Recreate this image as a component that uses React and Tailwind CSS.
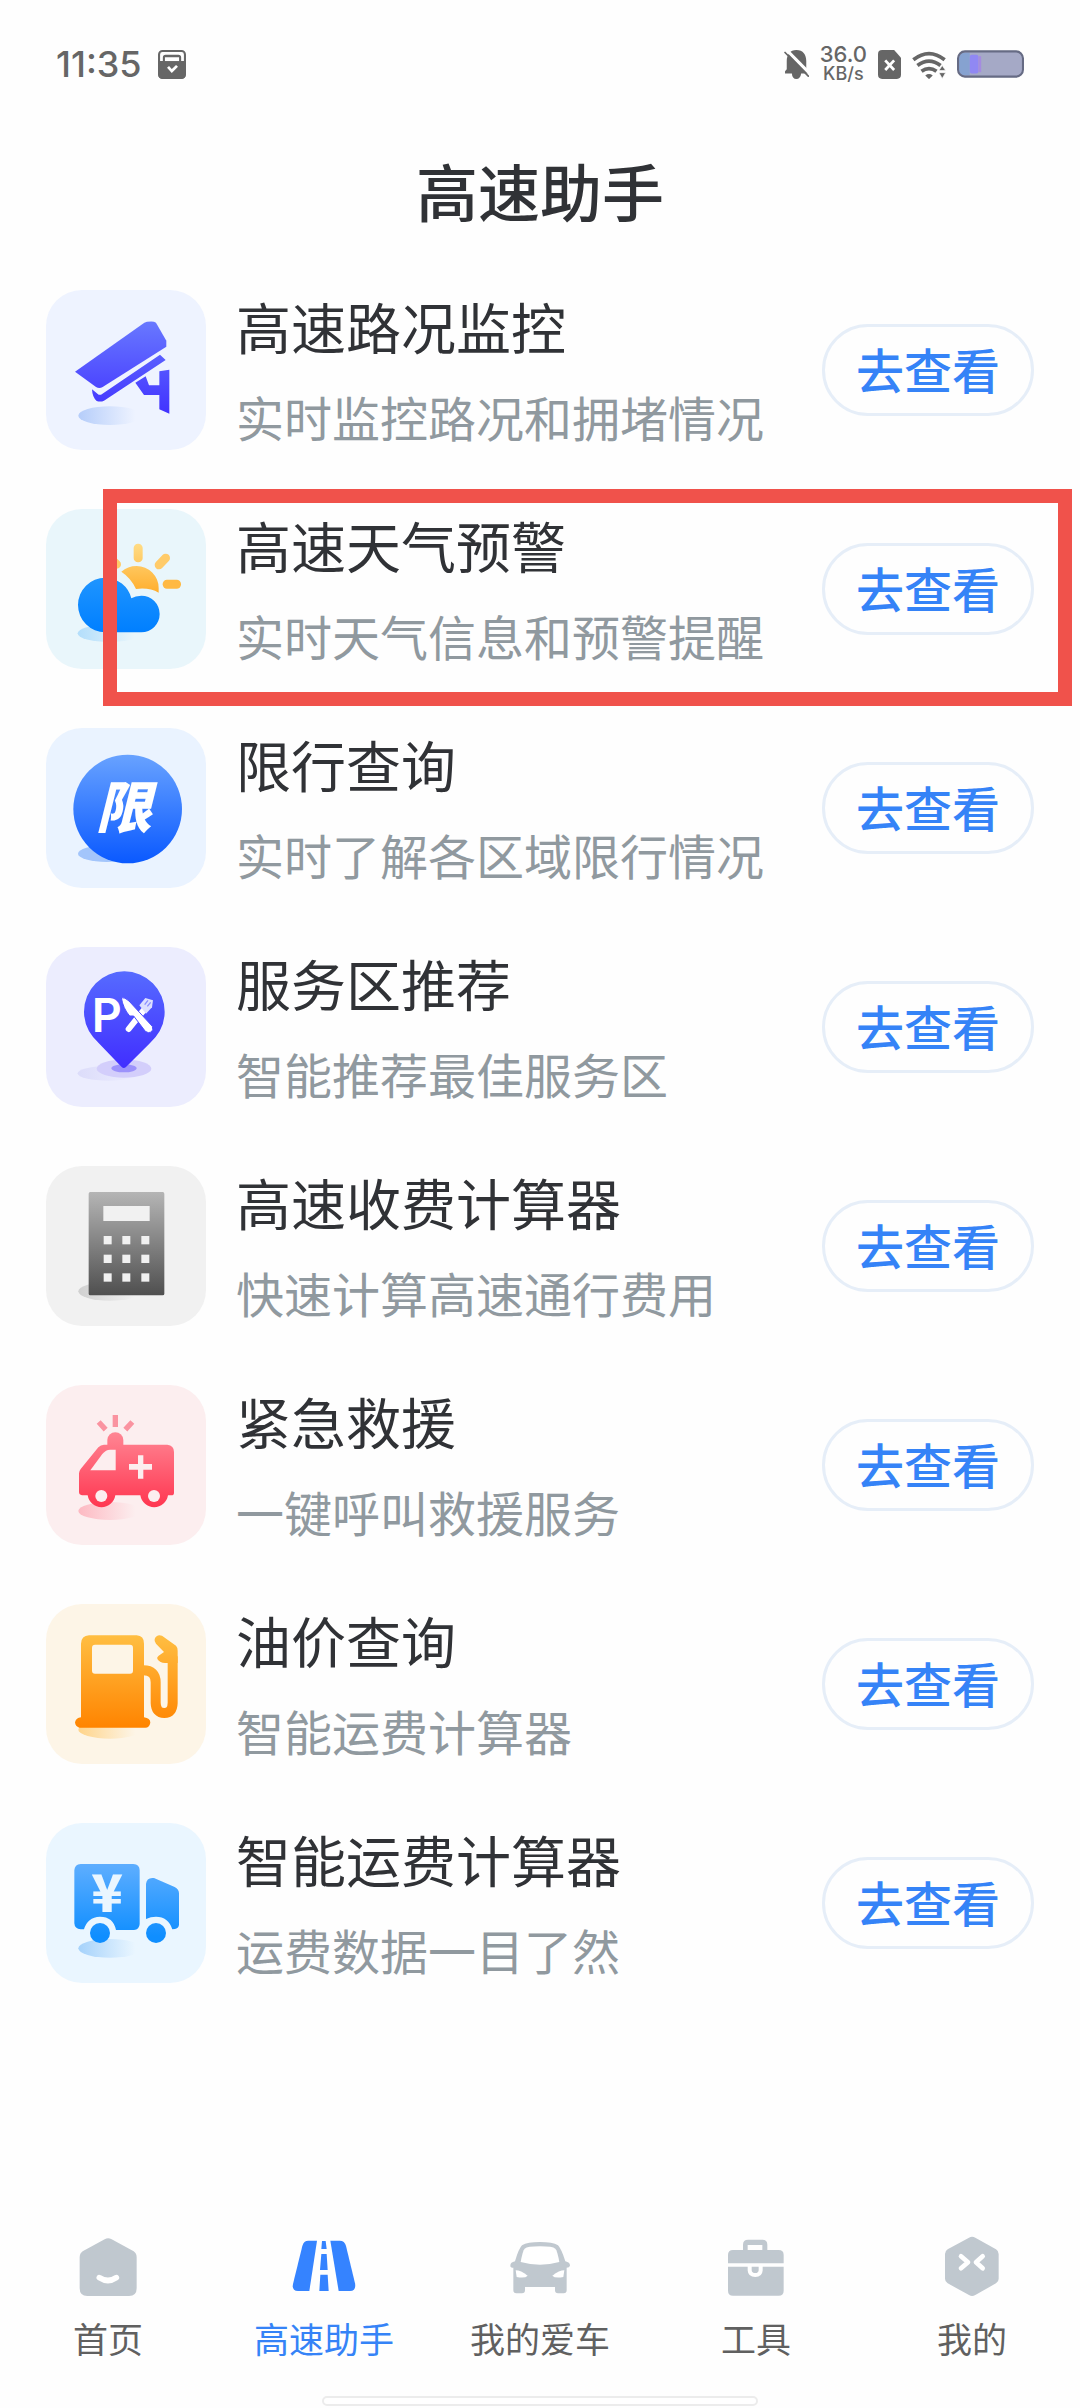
import clsx from "clsx";

// Elliptical shadow below each drawing, it fades out to the right
function Shadow({ id, color, cx = 240, cy, rx = 95, ry = 28 }) {
  return (
    <>
      <defs>
        <linearGradient id={id}>
          <stop offset="0%" stopColor={color} />
          <stop offset="90%" stopColor={color} stopOpacity={0} />
        </linearGradient>
      </defs>
      <ellipse cx={cx} cy={cy} rx={rx} ry={ry} fill={`url(#${id})`} />
    </>
  );
}

function Fade({ id, from, to, y1, y2 }) {
  return (
    <defs>
      <linearGradient
        id={id}
        gradientUnits="userSpaceOnUse"
        x1="0"
        x2="0"
        y1={y1}
        y2={y2}
      >
        <stop offset="0%" stopColor={from} />
        <stop offset="100%" stopColor={to} />
      </linearGradient>
    </defs>
  );
}

const CameraIcon = () => (
  <svg viewBox="48 60 480 480" className="size-full">
    <Shadow id="cameraShadow" color="#b5cdfa" cy={437} />
    <Fade id="camera" from="#6878ff" to="#4132ff" y1={155} y2={431} />
    <g fill="url(#camera)">
      <path d="M135 305 L343 158 Q350 154 372 155 L378 158 L409 212 V230 L218 351 Q208 357 198 351 Z" />
      <path d="M186 358 L206 374 H213 L390 254 L407 270 L222 392 Q212 397 200 393 Q187 382 186 358 Z" />
      <path d="M388 304 L418 299 V431 L388 418 V375 H342 L316 338 L347 319 L357 346 H388 Z" />
    </g>
  </svg>
);

const WeatherIcon = () => (
  <svg viewBox="48 91 480 480" className="size-full">
    <Shadow id="weatherShadow" color="#b3defb" cy={464} cx={238} ry={26} />
    <Fade id="sun" from="#ffdc85" to="#ffae2e" y1={195} y2={342} />
    <Fade id="cloud" from="#1f95ff" to="#007fff" y1={297} y2={461} />
    <path
      fill="url(#sun)"
      d="M274 279 Q293 262 320 262 A66 66 0 0 1 386 328 V342 Q358 326 318 331 Q303 298 274 279 Z"
    />
    <rect x="311" y="195" width="27" height="56" rx="13" fill="url(#sun)" />
    <rect x="398" y="303" width="55" height="27" rx="13" fill="#ffb943" />
    <path
      d="M387 259 L407 238 M260 257 L240 238"
      stroke="#ffcb69"
      strokeWidth="26"
      strokeLinecap="round"
    />
    <path
      fill="url(#cloud)"
      d="M226 297 A82 82 0 0 0 226 461 H334 A55 55 0 0 0 334 351 Q316 351 304 359 A82 82 0 0 0 226 297 Z"
    />
  </svg>
);

const LimitIcon = () => (
  <svg viewBox="48 24 480 480" className="size-full">
    <ellipse cx="230" cy="401" rx="86" ry="25" fill="#a3c5fb" />
    <Fade id="limit" from="#68a2ff" to="#0a59ff" y1={104} y2={430} />
    <circle cx="293" cy="267" r="163" fill="url(#limit)" />
    <text
      x="281"
      y="325"
      textAnchor="middle"
      fill="#fff"
      className="font-['Noto_Sans_CJK_SC',sans-serif] text-[168px] font-black italic"
    >
      限
    </text>
  </svg>
);

const ServiceIcon = () => (
  <svg viewBox="48 51 480 480" className="size-full">
    <Shadow id="pinShadow" color="#dcdcfa" cy={430} cx={235} rx={92} ry={22} />
    <ellipse cx="282" cy="416" rx="82" ry="27" fill="#d3cefb" />
    <ellipse cx="282" cy="415" rx="38" ry="12" fill="#9c92fb" />
    <Fade id="pin" from="#566bff" to="#412eff" y1={124} y2={415} />
    <path
      fill="url(#pin)"
      d="M283 124 A121 121 0 0 1 404 245 Q404 300 358 341 L288 411 Q281 417 275 411 L208 341 Q162 300 162 245 A121 121 0 0 1 283 124 Z"
    />
    <text
      x="185"
      y="306"
      fill="#fff"
      className="font-[Inter,sans-serif] text-[140px] font-semibold"
    >
      P
    </text>
    {/* fork */}
    <path
      d="M296 297 L340 242"
      stroke="#fff"
      strokeWidth="18"
      strokeLinecap="round"
    />
    <path fill="#dcdfff" d="M328 226 L346 204 L369 211 L366 232 L348 251 Z" />
    <path
      d="M344 224 L354 211 M352 229 L362 217"
      stroke="#8c90ff"
      strokeWidth="4"
    />
    {/* knife */}
    <path
      fill="#fff"
      stroke="#4b4dff"
      strokeWidth="3"
      d="M274 203 Q284 201 297 213 L367 289 Q371 300 364 306 Q355 311 346 304 L311 258 H299 Q279 235 274 203 Z"
    />
  </svg>
);

const CalculatorIcon = () => (
  <svg viewBox="48 48 480 480" className="size-full">
    <Shadow id="calcShadow" color="#d0d0d0" cy={424} />
    <Fade id="calc" from="#b5b5b5" to="#4f4f4f" y1={126} y2={436} />
    <rect x="176" y="126" width="227" height="310" rx="5" fill="url(#calc)" />
    <rect x="220" y="168" width="139" height="45" fill="#f1f1f1" />
    {[258, 314, 370].map((y) =>
      [221, 277, 334].map((x) => (
        <rect
          key={`${x}-${y}`}
          x={x}
          y={y}
          width="24"
          height="25"
          fill="#f1f1f1"
        />
      ))
    )}
  </svg>
);

const RescueIcon = () => (
  <svg viewBox="48 45 480 480" className="size-full">
    <Shadow id="rescueShadow" color="#fdb9c2" cy={423} ry={27} />
    <Fade id="rescue" from="#ff8593" to="#ff334e" y1={188} y2={420} />
    <path
      d="M256 135 V171 M206 156 L227 179 M307 156 L286 179"
      stroke="#fa93a0"
      strokeWidth="16"
    />
    <g fill="url(#rescue)">
      <path d="M232 228 V210 A24 23 0 0 1 280 210 V228 Z" />
      <path d="M222 224 H412 Q432 226 432 246 V368 Q432 376 424 376 H414 A42 42 0 0 1 331 376 H256 A42 42 0 0 1 173 376 H156 Q147 374 147 366 V310 Q147 304 152 297 L205 232 Q212 224 222 224 Z" />
    </g>
    <g fill="#fceeef">
      <path d="M257 239 V301 H181 L217 252 Q228 239 240 239 Z" />
      <path d="M324 256 H340 V282 H366 V299 H340 V326 H324 V299 H297 V282 H324 Z" />
      <circle cx="214" cy="378" r="18" />
      <circle cx="372" cy="378" r="18" />
    </g>
  </svg>
);

const FuelIcon = () => (
  <svg viewBox="48 703 480 480" className="size-full">
    <Shadow id="fuelShadow" color="#ffd48a" cy={1080} ry={27} />
    <Fade id="fuel" from="#ffbe42" to="#ff8400" y1={797} y2={1074} />
    <g fill="url(#fuel)">
      <path d="M177 797 H320 Q342 798 342 822 V1043 Q361 1046 361 1059 Q358 1074 346 1074 H148 Q136 1071 135 1058 Q138 1045 153 1043 V822 Q154 798 177 797 Z" />
      <path d="M374 808 Q380 793 396 798 L438 828 Q443 833 443 843 V880 H405 Q390 880 382 868 Q380 862 386 858 L402 847 L378 822 Q372 815 374 808 Z" />
    </g>
    <path
      d="M340 902 Q377 902 377 938 V1000 Q378 1030 403 1030 Q427 1030 428 1000 V860"
      fill="none"
      stroke="url(#fuel)"
      strokeWidth="30"
    />
    <rect x="186" y="825" width="123" height="87" rx="9" fill="#fdf5e7" />
  </svg>
);

const FreightIcon = () => (
  <svg viewBox="48 39 480 480" className="size-full">
    <Shadow id="freightShadow" color="#a5d2fb" cy={415} />
    <Fade id="freight" from="#5eaeff" to="#0f8eff" y1={162} y2={380} />
    <g fill="url(#freight)">
      <path d="M152 162 H310 Q329 163 329 181 V342 Q328 359 312 360 H258 Q250 320 210 320 Q172 322 162 358 H152 Q134 357 133 340 V181 Q134 163 152 162 Z" />
      <path d="M348 222 Q350 201 372 204 L434 231 Q447 238 447 250 V345 Q445 358 427 358 Q415 320 378 320 Q362 320 348 327 Z" />
      <circle cx="210" cy="369" r="30" />
      <circle cx="378" cy="369" r="30" />
    </g>
    <text
      x="231"
      y="307"
      textAnchor="middle"
      fill="#eaf6ff"
      className="font-['Noto_Sans_CJK_SC',sans-serif] text-[156px] font-black"
    >
      ¥
    </text>
  </svg>
);

const HomeIcon = () => (
  <svg viewBox="109 105 192 192" className="size-16" fill="currentColor">
    <path d="M195 118 Q205 111 216 118 L282 154 Q291 160 291 172 V265 Q291 288 268 288 H143 Q120 288 120 265 V172 Q120 160 129 154 Z" />
    <path
      d="M179 233 Q205 250 230 233"
      fill="none"
      stroke="#fff"
      strokeWidth="17"
      strokeLinecap="round"
    />
  </svg>
);

const RoadIcon = () => (
  <svg viewBox="757 105 192 192" className="size-16" fill="currentColor">
    <path d="M806 122 H832 L809 273 H775 Q756 273 760 252 L788 138 Q792 122 806 122 Z" />
    <path d="M872 122 H900 Q915 122 919 138 L946 250 Q950 273 931 273 H897 Z" />
    <path d="M847 123 H858 L861 147 H845 Z M845 162 H861 L864 210 H841 Z M842 224 H864 L867 273 H839 Z" />
  </svg>
);

const CarIcon = () => (
  <svg viewBox="1404 105 192 192" className="size-16" fill="currentColor">
    <path d="M1500 126 Q1538 126 1554 136 Q1564 146 1576 184 Q1590 187 1590 197 Q1588 203 1580 203 V271 Q1580 280 1571 280 H1554 Q1545 280 1545 271 V261 H1455 V271 Q1455 280 1446 280 H1429 Q1420 280 1420 271 V203 Q1411 203 1411 197 Q1411 187 1425 184 Q1436 146 1446 136 Q1462 126 1500 126 Z" />
    <g fill="#fff">
      <path d="M1500 139 Q1538 139 1546 146 Q1552 152 1558 186 Q1530 194 1500 194 Q1470 194 1442 186 Q1448 152 1454 146 Q1462 139 1500 139 Z" />
      <path d="M1427 211 Q1442 211 1463 227 Q1455 236 1430 231 Z" />
      <path d="M1573 211 Q1558 211 1537 227 Q1545 236 1570 231 Z" />
    </g>
  </svg>
);

const ToolboxIcon = () => (
  <svg viewBox="554 105 192 192" className="size-16" fill="currentColor">
    <path d="M611 152 V134 Q611 119 626 119 H669 Q684 119 684 134 V152 H669 V135 H625 V152 Z" />
    <path d="M566 190 V165 Q566 150 581 150 H718 Q733 150 733 165 V190 Z" />
    <path d="M566 200 H733 V272 Q733 287 718 287 H581 Q566 287 566 272 Z" />
    <path
      d="M631 198 V211 Q632 225 648 225 Q663 225 664 211 V198"
      fill="none"
      stroke="#fff"
      strokeWidth="12"
    />
  </svg>
);

const MineIcon = () => (
  <svg viewBox="1203 105 192 192" className="size-16" fill="currentColor">
    <path d="M1290 113 Q1299 108 1309 113 L1371 148 Q1379 153 1379 162 V236 Q1379 245 1371 250 L1309 285 Q1299 291 1290 285 L1226 250 Q1218 245 1218 236 V162 Q1218 153 1226 148 Z" />
    <path
      d="M1266 169 L1287 187 L1266 205 M1331 169 L1311 187 L1331 205"
      fill="none"
      stroke="#fff"
      strokeWidth="14"
      strokeLinecap="round"
      strokeLinejoin="round"
    />
  </svg>
);

const services = [
  {
    title: "高速路况监控",
    desc: "实时监控路况和拥堵情况",
    Icon: CameraIcon,
    tile: "bg-[#eef3ff]",
  },
  {
    title: "高速天气预警",
    desc: "实时天气信息和预警提醒",
    Icon: WeatherIcon,
    tile: "bg-[#e9f6fb]",
    marked: true,
  },
  {
    title: "限行查询",
    desc: "实时了解各区域限行情况",
    Icon: LimitIcon,
    tile: "bg-[#eaf3ff]",
  },
  {
    title: "服务区推荐",
    desc: "智能推荐最佳服务区",
    Icon: ServiceIcon,
    tile: "bg-[#ecedfe]",
  },
  {
    title: "高速收费计算器",
    desc: "快速计算高速通行费用",
    Icon: CalculatorIcon,
    tile: "bg-[#f1f1f1]",
  },
  {
    title: "紧急救援",
    desc: "一键呼叫救援服务",
    Icon: RescueIcon,
    tile: "bg-[#fceeef]",
  },
  {
    title: "油价查询",
    desc: "智能运费计算器",
    Icon: FuelIcon,
    tile: "bg-[#fdf5e7]",
  },
  {
    title: "智能运费计算器",
    desc: "运费数据一目了然",
    Icon: FreightIcon,
    tile: "bg-[#eaf6ff]",
  },
];

const tabs = [
  { label: "首页", Icon: HomeIcon },
  { label: "高速助手", Icon: RoadIcon, active: true },
  { label: "我的爱车", Icon: CarIcon },
  { label: "工具", Icon: ToolboxIcon },
  { label: "我的", Icon: MineIcon },
];

function StatusBar() {
  return (
    <div className="mt-11 flex h-10 items-center justify-between pr-14 pl-14 font-[Inter,sans-serif] text-[#666]">
      <div className="flex items-center gap-4">
        <span className="text-[36px] leading-10 font-medium">11:35</span>
        <svg viewBox="456 90 81 84" className="h-[29px] w-7">
          <rect
            x="459"
            y="93"
            width="75"
            height="78"
            rx="10"
            fill="none"
            stroke="currentColor"
            strokeWidth="6"
          />
          <path
            fill="currentColor"
            d="M457 122 H470 V112 Q470 104 478 104 H515 Q523 104 523 112 V122 H536 V162 Q536 173 525 173 H468 Q457 173 457 162 Z"
          />
          <path fill="#fff" d="M476 111 H517 V122 H476 Z" />
          <path
            d="M485 139 L496 151 L511 136"
            fill="none"
            stroke="#fff"
            strokeWidth="8"
          />
        </svg>
      </div>

      <div className="flex items-center gap-[11px]">
        <svg viewBox="714 90 73 84" className="h-[29px] w-[25px]">
          <path
            fill="currentColor"
            d="M750 90 C770 90 779 104 779 122 V147 L785 158 H764 Q762 174 750 174 Q738 174 737 158 H717 V152 L722 146 V122 C722 104 732 90 750 90 Z"
          />
          <path d="M721 89 L793 162" stroke="#fff" strokeWidth="9" />
          <path
            d="M717 97 L785 166"
            stroke="currentColor"
            strokeWidth="5"
            strokeLinecap="round"
          />
        </svg>
        <div className="flex flex-col items-center font-medium">
          <span className="text-[22px] leading-5">36.0</span>
          <span className="text-[18px] leading-5">KB/s</span>
        </div>
        <svg viewBox="981 90 67 84" className="h-[29px] w-[23px]">
          <path
            fill="currentColor"
            d="M993 90 H1028 L1048 112 V162 Q1048 174 1036 174 H993 Q981 174 981 162 V102 Q981 90 993 90 Z"
          />
          <path
            d="M1002 120 L1028 148 M1028 120 L1002 148"
            stroke="#fff"
            strokeWidth="8"
          />
        </svg>
        <svg viewBox="1079 90 100 84" className="h-[29px] w-[34px]">
          <g fill="none" stroke="currentColor" strokeWidth="11">
            <path d="M1083 118 Q1129 82 1175 118" />
            <path d="M1095 135 Q1129 109 1163 135" />
            <path d="M1107 152 Q1129 136 1151 152" />
          </g>
          <path fill="currentColor" d="M1118 164 Q1129 156 1140 164 L1129 175 Z" />
          <path
            fill="currentColor"
            stroke="#fff"
            strokeWidth="2"
            d="M1158 150 L1168 135 L1178 150 Z M1158 156 H1178 L1168 173 Z"
          />
        </svg>
        <svg viewBox="1208 92 194 79" className="h-7 w-[67px]">
          <rect x="1211" y="95" width="188" height="73" rx="20" fill="#a5a9c6" />
          <path
            fill="#86a2d0"
            d="M1245 98 V165 H1232 Q1214 165 1214 146 V117 Q1214 98 1232 98 Z"
          />
          <rect x="1245" y="105" width="25" height="54" rx="6" fill="#9088f3" />
          <rect x="1270" y="109" width="8" height="46" fill="#a58be0" />
          <rect
            x="1211"
            y="95"
            width="188"
            height="73"
            rx="20"
            fill="none"
            stroke="#666b84"
            strokeWidth="6"
          />
        </svg>
      </div>
    </div>
  );
}

function ServiceRow({ title, desc, Icon, tile, marked }) {
  return (
    <li className="relative flex items-center">
      <div
        className={clsx(
          "size-40 shrink-0 overflow-hidden rounded-[36px]",
          tile
        )}
      >
        <Icon />
      </div>
      <div className="ml-[30px] flex min-w-0 flex-1 flex-col gap-6 self-start">
        <h2 className="text-[55px] leading-[70px] whitespace-nowrap text-[#303236]">
          {title}
        </h2>
        <p className="text-[48px] leading-[64px] whitespace-nowrap text-[#90999f]">
          {desc}
        </p>
      </div>
      <button
        type="button"
        aria-label={`去查看 ${title}`}
        className="h-[92px] w-[212px] shrink-0 rounded-full border-[3px] border-[#e6eef8] pb-1 text-[48px] leading-[64px] font-medium text-[#3583f7]"
      >
        去查看
      </button>

      {/* red frame over the row */}
      {marked && (
        <div className="pointer-events-none absolute -top-5 -right-[38px] -bottom-[37px] left-[57px] border-[14px] border-[#f0524b]" />
      )}
    </li>
  );
}

export default function App() {
  return (
    <div className="flex min-h-screen flex-col bg-[#fefefe] font-['Noto_Sans_CJK_SC',sans-serif]">
      <StatusBar />

      <header className="mt-[61px] text-center">
        <h1 className="text-[62px] leading-[90px] font-medium text-[#303236]">
          高速助手
        </h1>
      </header>

      <main className="mt-[55px] px-[46px]">
        <ul className="flex flex-col gap-[59px]">
          {services.map((item) => (
            <ServiceRow key={item.title} {...item} />
          ))}
        </ul>
      </main>

      <nav className="mt-auto grid grid-cols-5">
        {tabs.map(({ label, Icon, active }) => (
          <a
            key={label}
            href="#"
            className="flex flex-col items-center gap-4 text-[35px] leading-[46px]"
          >
            <span className={active ? "text-[#3583ff]" : "text-[#c0c8cf]"}>
              <Icon />
            </span>
            <span className={active ? "text-[#3583f7]" : "text-[#606060]"}>
              {label}
            </span>
          </a>
        ))}
      </nav>
      <div className="mt-[35px] mb-[2px] h-[10px] w-[436px] self-center rounded-full border-2 border-[#ececec] bg-white" />
    </div>
  );
}
